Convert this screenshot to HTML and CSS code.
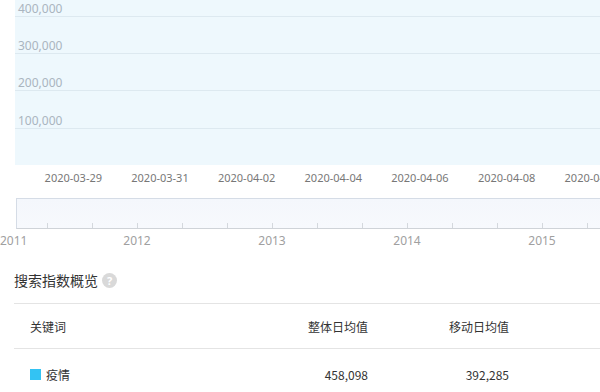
FILE: index.html
```html
<!DOCTYPE html>
<html lang="zh">
<head>
<meta charset="utf-8">
<link rel="stylesheet" href="styles.css">
</head>
<body>
<div class="page">
  <div class="chart">
    <div class="grid-row first"><span class="ylabel">400,000</span></div>
    <div class="grid-row"><span class="ylabel">300,000</span></div>
    <div class="grid-row"><span class="ylabel">200,000</span></div>
    <div class="grid-row last"><span class="ylabel">100,000</span></div>
    <div class="grid-fill"></div>
  </div>
  <div class="xaxis">
    <span class="xlabel">2020-03-29</span>
    <span class="xlabel">2020-03-31</span>
    <span class="xlabel">2020-04-02</span>
    <span class="xlabel">2020-04-04</span>
    <span class="xlabel">2020-04-06</span>
    <span class="xlabel">2020-04-08</span>
    <span class="xlabel">2020-04-10</span>
  </div>
  <div class="navigator">
    <div class="nav-ticks"></div>
  </div>
  <div class="years">
    <span class="year first">2011</span>
    <span class="year">2012</span>
    <span class="year">2013</span>
    <span class="year">2014</span>
    <span class="year">2015</span>
  </div>
  <div class="overview">
    <div class="title">搜索指数概览 <span class="help">?</span></div>
    <div class="table">
      <div class="trow head">
        <span class="c1">关键词</span>
        <span class="c2">整体日均值</span>
        <span class="c3">移动日均值</span>
      </div>
      <div class="trow body">
        <span class="c1"><i class="swatch"></i>疫情</span>
        <span class="c2">458,098</span>
        <span class="c3">392,285</span>
      </div>
    </div>
  </div>
</div>
</body>
</html>
```

FILE: styles.css
```css
html, body {
  margin: 0;
  padding: 0;
  width: 600px;
  height: 392px;
  overflow: hidden;
  background: #fff;
  font-family: "Noto Sans", "Noto Sans CJK SC", sans-serif;
}
.page {
  width: 600px;
  overflow: hidden;
}
.chart {
  margin-left: 15px;
  height: 165px;
  background: #eef8fd;
  display: flex;
  flex-direction: column;
}
.grid-row {
  height: 36px;
  border-bottom: 1px solid #dde9f0;
  display: flex;
  align-items: flex-end;
  padding-left: 3px;
}
.grid-row.first {
  height: 16px;
}
.grid-row.last {
  height: 37px;
}
.grid-fill {
  flex: 1;
}
.ylabel {
  font-size: 12px;
  line-height: 14px;
  color: #aab5bf;
}
.xaxis {
  display: flex;
  padding-left: 30px;
  height: 26px;
  align-items: center;
  white-space: nowrap;
}
.xlabel {
  flex: 0 0 86.67px;
  text-align: center;
  font-size: 11px;
  color: #777;
  line-height: 26px;
}
.navigator {
  margin-left: 16px;
  margin-top: 7px;
  height: 29px;
  background: linear-gradient(#f4f7fc, #f7f9fd);
  border-top: 1px solid #d5dce6;
  border-left: 1px solid #d5dce6;
  border-bottom: 1px solid #cfd3d8;
  display: flex;
  flex-direction: column;
  justify-content: flex-end;
}
.nav-ticks {
  height: 5px;
  background: repeating-linear-gradient(to right, transparent 0 30px, #d4d8dd 30px 31px, transparent 31px 45px);
}
.years {
  display: flex;
  height: 24px;
  align-items: center;
  white-space: nowrap;
}
.year {
  flex: 0 0 135px;
  text-align: center;
  font-size: 12px;
  color: #a0a0a0;
  line-height: 24px;
}
.year.first {
  flex: 0 0 69.5px;
  text-align: left;
}
.overview {
  padding-left: 14px;
  margin-top: 10px;
}
.title {
  font-family: "Noto Sans CJK SC", sans-serif;
  font-size: 14px;
  color: #333;
  height: 34px;
  display: flex;
  align-items: center;
  gap: 4px;
  border-bottom: 1px solid #e4e4e4;
  padding-bottom: 6px;
}
.help {
  width: 15px;
  height: 15px;
  border-radius: 50%;
  background: #d9d9d9;
  color: #fff;
  font-size: 11px;
  font-weight: bold;
  line-height: 15px;
  text-align: center;
  font-family: "Noto Sans", sans-serif;
}
.trow {
  display: flex;
  align-items: center;
  height: 44px;
  font-family: "Noto Sans CJK SC", sans-serif;
  font-size: 12px;
  color: #333;
}
.trow.head {
  border-bottom: 1px solid #e4e4e4;
}
.trow.body {
  height: 50px;
}
.c1 {
  flex: 0 0 192px;
  padding-left: 16px;
  display: flex;
  align-items: center;
}
.c2 {
  flex: 0 0 146px;
  text-align: right;
}
.c3 {
  flex: 0 0 141px;
  text-align: right;
}
.swatch {
  width: 11px;
  height: 11px;
  background: #33c3f3;
  margin-right: 5px;
  display: inline-block;
}
```
